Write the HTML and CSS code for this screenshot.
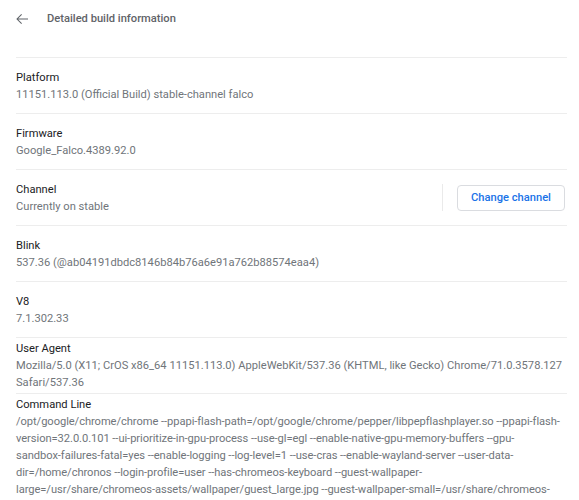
FILE: index.html
```html
<!DOCTYPE html>
<html>
<head>
<meta charset="utf-8">
<link rel="stylesheet" href="styles.css">
</head>
<body>
<div class="page">
  <div class="header">
    <svg class="back" viewBox="0 0 24 24" width="18" height="18"><path d="M20 11.3H6.9l5.1-5.1-1-1L4.4 12l6.6 6.8 1-1-5.1-5.1H20z" fill="#5f6368"/></svg>
    <div class="title">Detailed build information</div>
  </div>
  <div class="row">
    <div class="info">
      <div class="label">Platform</div>
      <div class="value">11151.113.0 (Official Build) stable-channel falco</div>
    </div>
  </div>
  <div class="row">
    <div class="info">
      <div class="label">Firmware</div>
      <div class="value">Google_Falco.4389.92.0</div>
    </div>
  </div>
  <div class="row">
    <div class="info">
      <div class="label">Channel</div>
      <div class="value">Currently on stable</div>
    </div>
    <div class="sep"></div>
    <button class="btn">Change channel</button>
  </div>
  <div class="row">
    <div class="info">
      <div class="label">Blink</div>
      <div class="value">537.36 (@ab04191dbdc8146b84b76a6e91a762b88574eaa4)</div>
    </div>
  </div>
  <div class="row">
    <div class="info">
      <div class="label">V8</div>
      <div class="value">7.1.302.33</div>
    </div>
  </div>
  <div class="row tight">
    <div class="info">
      <div class="label">User Agent</div>
      <div class="value">Mozilla/5.0 (X11; CrOS x86_64 11151.113.0) AppleWebKit/537.36 (KHTML, like Gecko) Chrome/71.0.3578.127 Safari/537.36</div>
    </div>
  </div>
  <div class="row tight">
    <div class="info">
      <div class="label">Command Line</div>
      <div class="value cmd">/opt/google/chrome/chrome --ppapi-flash-path=/opt/google/chrome/pepper/libpepflashplayer.so --ppapi-flash-<br>version=32.0.0.101 --ui-prioritize-in-gpu-process --use-gl=egl --enable-native-gpu-memory-buffers --gpu-<br>sandbox-failures-fatal=yes --enable-logging --log-level=1 --use-cras --enable-wayland-server --user-data-<br>dir=/home/chronos --login-profile=user --has-chromeos-keyboard --guest-wallpaper-<br>large=/usr/share/chromeos-assets/wallpaper/guest_large.jpg --guest-wallpaper-small=/usr/share/chromeos-<br>assets/wallpaper/guest_small.jpg</div>
    </div>
  </div>
</div>
</body>
</html>
```

FILE: styles.css
```css
* { box-sizing: border-box; }
html, body { margin: 0; padding: 0; background: #fff; }
body {
  font-family: Roboto, "Liberation Sans", sans-serif;
  font-size: 11.15px;
  line-height: 17px;
  color: #202124;
  overflow: hidden;
}
.page { width: 579px; }
.header {
  display: flex;
  align-items: center;
  height: 37px;
  padding-left: 13px;
  margin-bottom: 20px;
}
.back { display: block; margin-right: 16px; }
.title {
  font-size: 11.15px;
  font-weight: 500;
  color: #5f6368;
}
.row {
  display: flex;
  align-items: center;
  margin: 0 12px 0 16px;
  padding: 10.5px 0;
  border-top: 1px solid #ededed;
}
.row.tight { padding: 1.5px 0 2.5px; }
.info { flex: 1; min-width: 0; }
.label { color: #202124; }
.value { color: #70757a; word-wrap: break-word; }
.cmd { letter-spacing: -0.06px; }
.sep {
  width: 1px;
  height: 27px;
  background: #eaeaea;
  margin: 0 14px 0 0;
}
.btn {
  font-family: Roboto, "Liberation Sans", sans-serif;
  font-size: 11.15px;
  font-weight: 500;
  color: #1a73e8;
  background: #fff;
  border: 1px solid #dadce0;
  border-radius: 4px;
  height: 26px;
  width: 108px;
  padding: 0;
  margin-right: 2px;
}
```
